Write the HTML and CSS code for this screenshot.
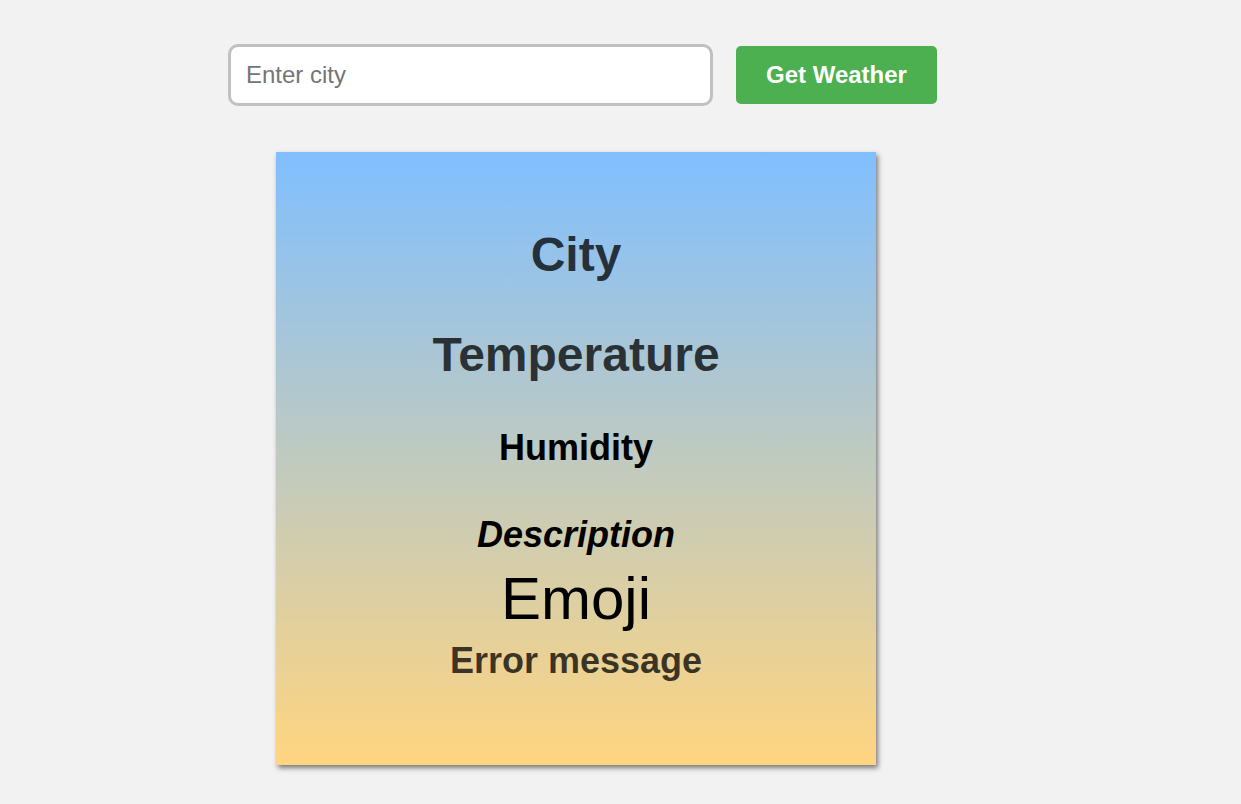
FILE: index.html
```
<!DOCTYPE html>
<html lang="en">
<head>
<meta charset="UTF-8">
<title>Weather App</title>
<link rel="stylesheet" href="styles.css">
</head>
<body>
<form class="weather-form">
  <input type="text" class="city-input" placeholder="Enter city">
  <button type="submit" class="get-btn">Get Weather</button>
</form>
<div class="card">
  <h1 class="city-display">City</h1>
  <p class="temp-display">Temperature</p>
  <p class="humidity-display">Humidity</p>
  <p class="desc-display">Description</p>
  <p class="weather-emoji">Emoji</p>
  <p class="error-display">Error message</p>
</div>
</body>
</html>
```
FILE: styles.css
```
html, body {
  margin: 0;
  padding: 0;
}
body {
  background: #f2f2f2;
  font-family: "Liberation Sans", Arial, sans-serif;
  padding-bottom: 30px;
}
.weather-form {
  display: flex;
  align-items: center;
  margin: 44px 0 0 228px;
  height: 62px;
}
.city-input {
  box-sizing: border-box;
  width: 485px;
  height: 62px;
  padding: 14px 15px;
  font-family: "Liberation Sans", Arial, sans-serif;
  font-size: 24px;
  line-height: 28px;
  border: 3px solid #c0c0c0;
  border-radius: 10px;
  background: #ffffff;
  color: #000;
  outline: none;
}
.city-input::placeholder {
  color: #757575;
}
.get-btn {
  box-sizing: border-box;
  width: 201px;
  height: 58px;
  margin-left: 23px;
  padding: 0;
  border: none;
  border-radius: 5px;
  background: #4caf50;
  color: #ffffff;
  font-family: "Liberation Sans", Arial, sans-serif;
  font-size: 24px;
  font-weight: bold;
  cursor: pointer;
}
.card {
  box-sizing: border-box;
  width: 600px;
  height: 613px;
  margin: 46px 0 0 276px;
  padding: 75px 0 0 0;
  background: linear-gradient(180deg, #80bfff, #ffd580);
  box-shadow: 2px 3px 5px rgba(0, 0, 0, 0.5);
  display: flex;
  flex-direction: column;
  align-items: center;
  text-align: center;
}
.card h1, .card p {
  margin: 0;
}
.city-display {
  font-size: 48px;
  line-height: 56px;
  font-weight: bold;
  color: rgba(0, 0, 0, 0.75);
}
.temp-display {
  margin-top: 44px !important;
  font-size: 48px;
  line-height: 56px;
  font-weight: bold;
  color: rgba(0, 0, 0, 0.75);
}
.humidity-display {
  margin-top: 44px !important;
  font-size: 36px;
  line-height: 42px;
  font-weight: bold;
  color: #000;
}
.desc-display {
  margin-top: 45px !important;
  font-size: 36px;
  line-height: 42px;
  font-weight: bold;
  font-style: italic;
  color: #000;
}
.weather-emoji {
  margin-top: 8px !important;
  font-size: 60px;
  line-height: 70px;
  color: #000;
}
.error-display {
  margin-top: 6px !important;
  font-size: 36px;
  line-height: 42px;
  font-weight: bold;
  color: rgba(0, 0, 0, 0.75);
}
```
